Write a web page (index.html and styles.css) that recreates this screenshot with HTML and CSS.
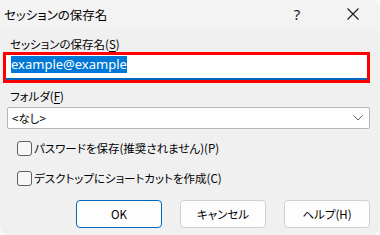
FILE: index.html
```html
<!DOCTYPE html>
<html lang="ja">
<head>
<meta charset="utf-8">
<link rel="stylesheet" href="styles.css">
</head>
<body>
<div class="window">
  <div class="titlebar">
    <span class="title">セッションの保存名</span>
    <span class="tb-btn help">?</span>
    <span class="tb-btn close">
      <svg width="14" height="14" viewBox="0 0 14 14"><path d="M1.5 1.5 L12.5 12.5 M12.5 1.5 L1.5 12.5" stroke="#1a1a1a" stroke-width="1.1" fill="none"/></svg>
    </span>
  </div>
  <div class="content">
    <div class="label l1">セッションの保存名(<u>S</u>)</div>
    <div class="annot">
      <div class="input"><span class="sel">example@example</span></div>
    </div>
    <div class="label l2">フォルダ(<u>F</u>)</div>
    <div class="select">
      <span>&lt;なし&gt;</span>
      <svg class="chev" width="10" height="6" viewBox="0 0 10 6"><path d="M0.5 0.5 L5 5 L9.5 0.5" stroke="#606060" stroke-width="1" fill="none"/></svg>
    </div>
    <div class="check c1"><span class="box"></span><span>パスワードを保存(推奨されません)(P)</span></div>
    <div class="check c2"><span class="box"></span><span>デスクトップにショートカットを作成(C)</span></div>
    <div class="buttons">
      <div class="btn default">OK</div>
      <div class="btn">キャンセル</div>
      <div class="btn">ヘルプ(H)</div>
    </div>
  </div>
</div>
</body>
</html>
```
FILE: styles.css
```css
html, body {
  margin: 0;
  padding: 0;
  background: #fbfbfb;
}
body {
  width: 380px;
  height: 235px;
  overflow: hidden;
  font-family: "Noto Sans CJK JP", "Noto Sans", sans-serif;
  font-size: 11.5px;
  color: #000;
  font-feature-settings: "palt";
}
.window {
  width: 380px;
  height: 235px;
  background: #f0f0f0;
  border-radius: 0 8px 8px 8px;
  overflow: hidden;
}
.titlebar {
  height: 28px;
  display: flex;
  align-items: center;
  background: #f3f3f3;
}
.title {
  flex: 1;
  padding-left: 4px;
  font-size: 12.5px;
}
.tb-btn {
  width: 56px;
  height: 28px;
  display: flex;
  align-items: center;
  justify-content: center;
  color: #1a1a1a;
}
.help {
  font-family: "Noto Sans", sans-serif;
  font-size: 15px;
}
.close {
  width: 55px;
}
.content {
  padding: 0 10px 0 3px;
}
.label {
  height: 16px;
  line-height: 16px;
  padding-left: 7px;
}
.l1 { margin-top: 8px; }
u { text-underline-offset: 2px; }
.annot {
  border: 3px solid #ff0000;
  width: 361px;
}
.input {
  height: 23px;
  background: #ffffff;
  border-bottom: 2px solid #0067c0;
  padding-left: 5px;
  display: flex;
  align-items: center;
}
.sel {
  background: #0078d7;
  color: #fff;
  font-family: "Noto Sans", sans-serif;
  font-size: 13px;
  line-height: 17px;
  height: 17px;
  margin-top: -4px;
}
.l2 { margin-top: 5px; }
.select {
  margin: 3px 0 0 4px;
  border: 1px solid #b5b5b5;
  border-radius: 2px;
  background: #fff;
  display: flex;
  align-items: center;
  justify-content: space-between;
  padding: 0 6px 0 4px;
  box-sizing: border-box;
  height: 22px;
  width: 363px;
}
.check {
  display: flex;
  align-items: center;
  padding-left: 14px;
  height: 16px;
  line-height: 16px;
}
.c1 { margin-top: 11px; }
.c2 { margin-top: 14px; }
.box {
  width: 13px;
  height: 13px;
  border: 1px solid #5f5f5f;
  border-radius: 3px;
  background: #f7f7f7;
  margin-right: 2px;
}
.buttons {
  display: flex;
  justify-content: flex-end;
  gap: 18px;
  margin-top: 14px;
}
.btn {
  width: 86px;
  height: 28px;
  box-sizing: border-box;
  border: 1px solid #d0d0d0;
  border-radius: 4px;
  background: #fdfdfd;
  display: flex;
  align-items: center;
  justify-content: center;
}
.btn.default {
  border: 1px solid #0067c0;
}
```
